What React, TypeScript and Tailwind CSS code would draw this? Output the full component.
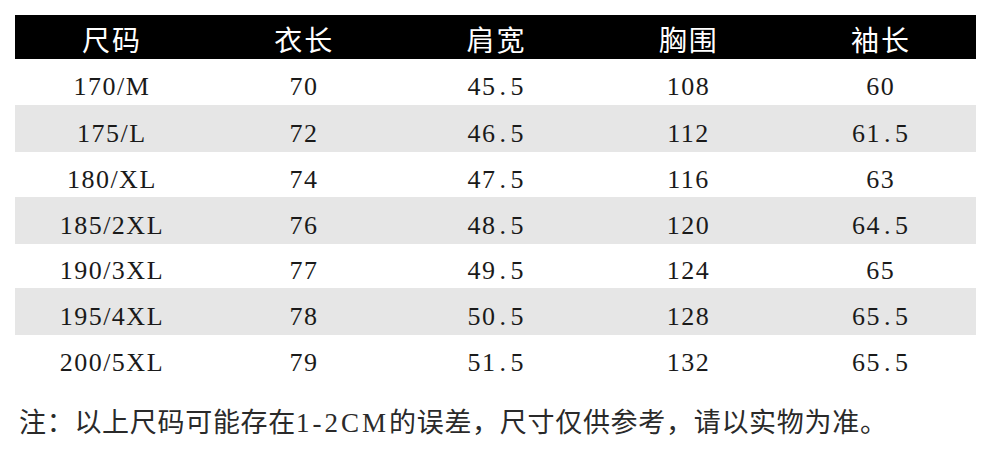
import React from "react";

const headers = ["尺码", "衣长", "肩宽", "胸围", "袖长"];

const rows: { cells: string[]; cls: string }[] = [
  { cells: ["170/M", "70", "45.5", "108", "60"], cls: "h-[46px] bg-white" },
  { cells: ["175/L", "72", "46.5", "112", "61.5"], cls: "h-[47px] bg-[#e6e6e6]" },
  { cells: ["180/XL", "74", "47.5", "116", "63"], cls: "h-[45px] bg-white" },
  { cells: ["185/2XL", "76", "48.5", "120", "64.5"], cls: "h-[47px] bg-[#e6e6e6]" },
  { cells: ["190/3XL", "77", "49.5", "124", "65"], cls: "h-[44px] bg-white" },
  { cells: ["195/4XL", "78", "50.5", "128", "65.5"], cls: "h-[47px] bg-[#e6e6e6]" },
  { cells: ["200/5XL", "79", "51.5", "132", "65.5"], cls: "h-[45px] bg-white" },
];

function Value({ text }: { text: string }) {
  const dot = text.indexOf(".");
  if (dot < 0) return <span>{text}</span>;
  return (
    <span className="inline-flex">
      <span>{text.slice(0, dot)}</span>
      <span className="inline-block w-[14px] text-center">.</span>
      <span>{text.slice(dot + 1)}</span>
    </span>
  );
}

export default function App() {
  return (
    <div className="w-[990px] h-[450px] bg-white overflow-hidden">
      <div className="ml-[15px] mt-[15px] w-[961px]">
        <div className="grid grid-cols-5 h-[44px] bg-black">
          {headers.map((h) => (
            <div
              key={h}
              className="flex items-center justify-center pt-[4px] pl-[2px] text-white text-[28px] leading-none tracking-[2px] font-['Noto_Sans_CJK_SC',sans-serif]"
            >
              {h}
            </div>
          ))}
        </div>
        {rows.map((r) => (
          <div key={r.cells[0]} className={`grid grid-cols-5 ${r.cls}`}>
            {r.cells.map((c, i) => (
              <div
                key={i}
                className="flex items-center justify-center pt-[10px] pl-[1.5px] text-[#1a1a1a] text-[26px] leading-none tracking-[1.5px] font-['Liberation_Serif',serif]"
              >
                <Value text={c} />
              </div>
            ))}
          </div>
        ))}
      </div>
      <div className="mt-[27px] pl-[19px] text-[27px] leading-[27px] tracking-[0.7px] text-[#2a2a2a] font-['Noto_Sans_CJK_SC',sans-serif] whitespace-nowrap">
        注：以上尺码可能存在
        <span className="font-['Liberation_Serif',serif] tracking-[3px]">1-2CM</span>
        的误差，尺寸仅供参考，请以实物为准。
      </div>
    </div>
  );
}
